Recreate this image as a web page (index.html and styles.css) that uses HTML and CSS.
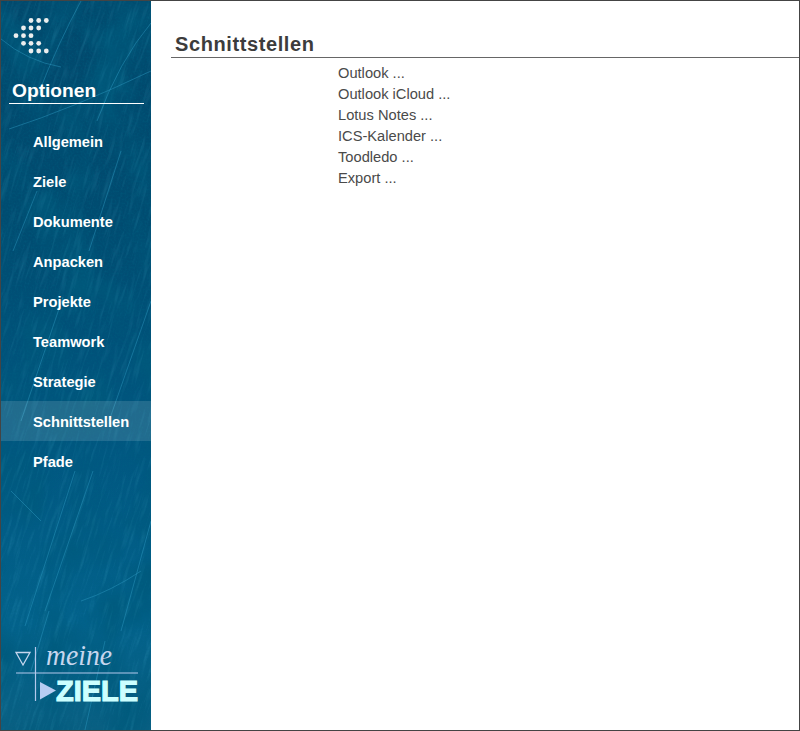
FILE: index.html
```html
<!doctype html>
<html>
<head>
  <title>Optionen</title>
  <meta charset="utf-8"/>
  <link rel="stylesheet" href="styles.css">
</head>
<body>
  <div class="Window">
    <div class="Sidebar">
      <svg class="Sidebar__Texture" width="150" height="729" viewBox="0 0 150 729" aria-hidden="true">
        <defs>
          <linearGradient id="base" x1="0" y1="0" x2="0" y2="1">
            <stop offset="0" stop-color="#02486c"/>
            <stop offset="0.3" stop-color="#014b70"/>
            <stop offset="0.6" stop-color="#015680"/>
            <stop offset="0.85" stop-color="#03628c"/>
            <stop offset="1" stop-color="#0a5f82"/>
          </linearGradient>
          <filter id="streaks" x="0" y="0" width="100%" height="100%">
            <feTurbulence type="fractalNoise" baseFrequency="0.3 0.03" numOctaves="3" seed="7"/>
            <feColorMatrix values="0 0 0 0 0.1  0 0 0 0 0.55  0 0 0 0 0.75  1.9 0 0 0 -0.95"/>
          </filter>
          <filter id="mottle" x="0" y="0" width="100%" height="100%">
            <feTurbulence type="fractalNoise" baseFrequency="0.022 0.016" numOctaves="3" seed="12"/>
            <feColorMatrix values="0 0 0 0 0  0 0 0 0 0.1  0 0 0 0 0.2  2.4 0 0 0 -0.95"/>
          </filter>
          <filter id="grain" x="0" y="0" width="100%" height="100%">
            <feTurbulence type="fractalNoise" baseFrequency="0.5" numOctaves="2" seed="3"/>
            <feColorMatrix values="0 0 0 0 0  0 0 0 0 0.12  0 0 0 0 0.22  1.6 0 0 0 -0.6"/>
          </filter>
        </defs>
        <rect width="150" height="729" fill="url(#base)"/>
        <rect width="150" height="729" filter="url(#mottle)" opacity="0.85"/>
        <g transform="rotate(17 75 365)">
          <rect x="-150" y="-100" width="450" height="930" filter="url(#streaks)" opacity="0.22"/>
        </g>
        <rect width="150" height="729" filter="url(#grain)" opacity="0.5"/>
        <g class="Sidebar__Scratches">
          <path d="M0 38 Q26 60 60 66"/>
          <path d="M8 128 Q70 108 150 70"/>
          <path d="M80 0 Q58 40 36 96"/>
          <path d="M150 22 Q118 60 96 120"/>
          <path d="M120 150 L88 250"/>
          <path d="M36 190 L12 250"/>
          <path d="M150 300 L108 420"/>
          <path d="M62 296 L20 420"/>
          <path d="M92 470 L44 610"/>
          <path d="M74 470 L24 625"/>
          <path d="M150 520 L120 630"/>
          <path d="M140 570 Q110 590 80 600"/>
          <path d="M10 490 L40 520"/>
          <path d="M104 640 L84 729"/>
          <path d="M48 610 L30 670"/>
        </g>
      </svg>

      <svg class="Sidebar__Logo" width="60" height="60" viewBox="1 1 60 60" aria-hidden="true">
        <g fill="#eceeee">
          <circle cx="31" cy="20.5" r="2.4"/><circle cx="38.7" cy="20.5" r="2.4"/><circle cx="46.3" cy="20.5" r="2.4"/>
          <circle cx="23.5" cy="28" r="2.4"/><circle cx="31" cy="28" r="2.4"/><circle cx="38.7" cy="28" r="2.4"/>
          <circle cx="16" cy="35.7" r="2.4"/><circle cx="23.5" cy="35.7" r="2.4"/><circle cx="31" cy="35.7" r="2.4"/>
          <circle cx="23.5" cy="43.3" r="2.4"/><circle cx="31" cy="43.3" r="2.4"/><circle cx="38.7" cy="43.3" r="2.4"/>
          <circle cx="31" cy="51" r="2.4"/><circle cx="38.7" cy="51" r="2.4"/><circle cx="46.3" cy="51" r="2.4"/>
        </g>
      </svg>

      <div class="Sidebar__Title">Optionen</div>

      <ul class="Nav">
        <li class="Nav__Item">Allgemein</li>
        <li class="Nav__Item">Ziele</li>
        <li class="Nav__Item">Dokumente</li>
        <li class="Nav__Item">Anpacken</li>
        <li class="Nav__Item">Projekte</li>
        <li class="Nav__Item">Teamwork</li>
        <li class="Nav__Item">Strategie</li>
        <li class="Nav__Item Nav__Item--active">Schnittstellen</li>
        <li class="Nav__Item">Pfade</li>
      </ul>

      <svg class="Sidebar__Brand" width="150" height="100" viewBox="1 630 150 100">
        <path class="Brand__Outline" d="M16 652.5H30L23 665Z"/>
        <path class="Brand__Rule" d="M35.5 647V701M16 673H138"/>
        <path class="Brand__Arrow" d="M40 682L56 690.5L40 699.5Z"/>
        <text class="Brand__Meine" x="46" y="665" textLength="66" lengthAdjust="spacingAndGlyphs">meine</text>
        <text class="Brand__Ziele" x="56" y="700.5" textLength="82" lengthAdjust="spacingAndGlyphs">ZIELE</text>
      </svg>
    </div>

    <div class="Content">
      <h1 class="Content__Title">Schnittstellen</h1>
      <ul class="Links">
        <li>Outlook ...</li>
        <li>Outlook iCloud ...</li>
        <li>Lotus Notes ...</li>
        <li>ICS-Kalender ...</li>
        <li>Toodledo ...</li>
        <li>Export ...</li>
      </ul>
    </div>
  </div>
</body>
</html>
```

FILE: styles.css
```css
html, body {
  margin: 0;
  padding: 0;
}

body {
  background-color: #fff;
  font-family: "Liberation Sans", Arial, sans-serif;
}

.Window {
  border: 1px solid #444;
  box-sizing: border-box;
  display: flex;
  height: 731px;
  overflow: hidden;
  width: 800px;
}

.Sidebar {
  display: flex;
  flex-direction: column;
  flex-shrink: 0;
  position: relative;
  width: 150px;
}
.Sidebar__Texture {
  left: 0;
  position: absolute;
  top: 0;
}
.Sidebar__Scratches path {
  fill: none;
  stroke: #2f9cc4;
  stroke-opacity: 0.45;
  stroke-width: 1;
}
.Sidebar__Logo,
.Sidebar__Brand {
  display: block;
  flex-shrink: 0;
  position: relative;
}
.Sidebar__Brand {
  margin-top: auto;
}
.Sidebar__Title {
  border-bottom: 1px solid #fff;
  color: #fff;
  font-size: 19.2px;
  font-weight: bold;
  line-height: 22px;
  margin: 19px 7px 17px 8px;
  padding: 0 0 1px 3px;
  position: relative;
}

.Nav {
  list-style: none;
  margin: 0;
  padding: 0;
  position: relative;
}
.Nav__Item {
  color: #fff;
  font-size: 14.67px;
  font-weight: bold;
  height: 40px;
  line-height: 42px;
  padding-left: 32px;
}
.Nav__Item--active {
  background-color: rgba(255, 255, 255, .13);
}

.Brand__Outline {
  fill: none;
  stroke: #c6d6ee;
  stroke-width: 1.3;
}
.Brand__Rule {
  fill: none;
  stroke: #b4c8ec;
  stroke-width: 1.2;
}
.Brand__Arrow {
  fill: #b8ccf2;
}
.Brand__Meine {
  fill: #c6d6ee;
  font-family: "Liberation Serif", serif;
  font-size: 29px;
  font-style: italic;
}
.Brand__Ziele {
  fill: #ccffff;
  font-family: "Liberation Sans", Arial, sans-serif;
  font-size: 30px;
  font-weight: bold;
  stroke: #ccffff;
  stroke-width: 1.2;
}

.Content {
  flex: 1;
  padding: 31px 0 0 20px;
}
.Content__Title {
  border-bottom: 1px solid #666;
  color: #3c3c3c;
  font-size: 20px;
  font-weight: bold;
  letter-spacing: .6px;
  line-height: 25px;
  margin: 0;
  padding-left: 4px;
}
.Links {
  color: #4a4a4a;
  font-size: 14.67px;
  line-height: 21px;
  list-style: none;
  margin: 5px 0 0;
  padding: 0 0 0 167px;
}
```
